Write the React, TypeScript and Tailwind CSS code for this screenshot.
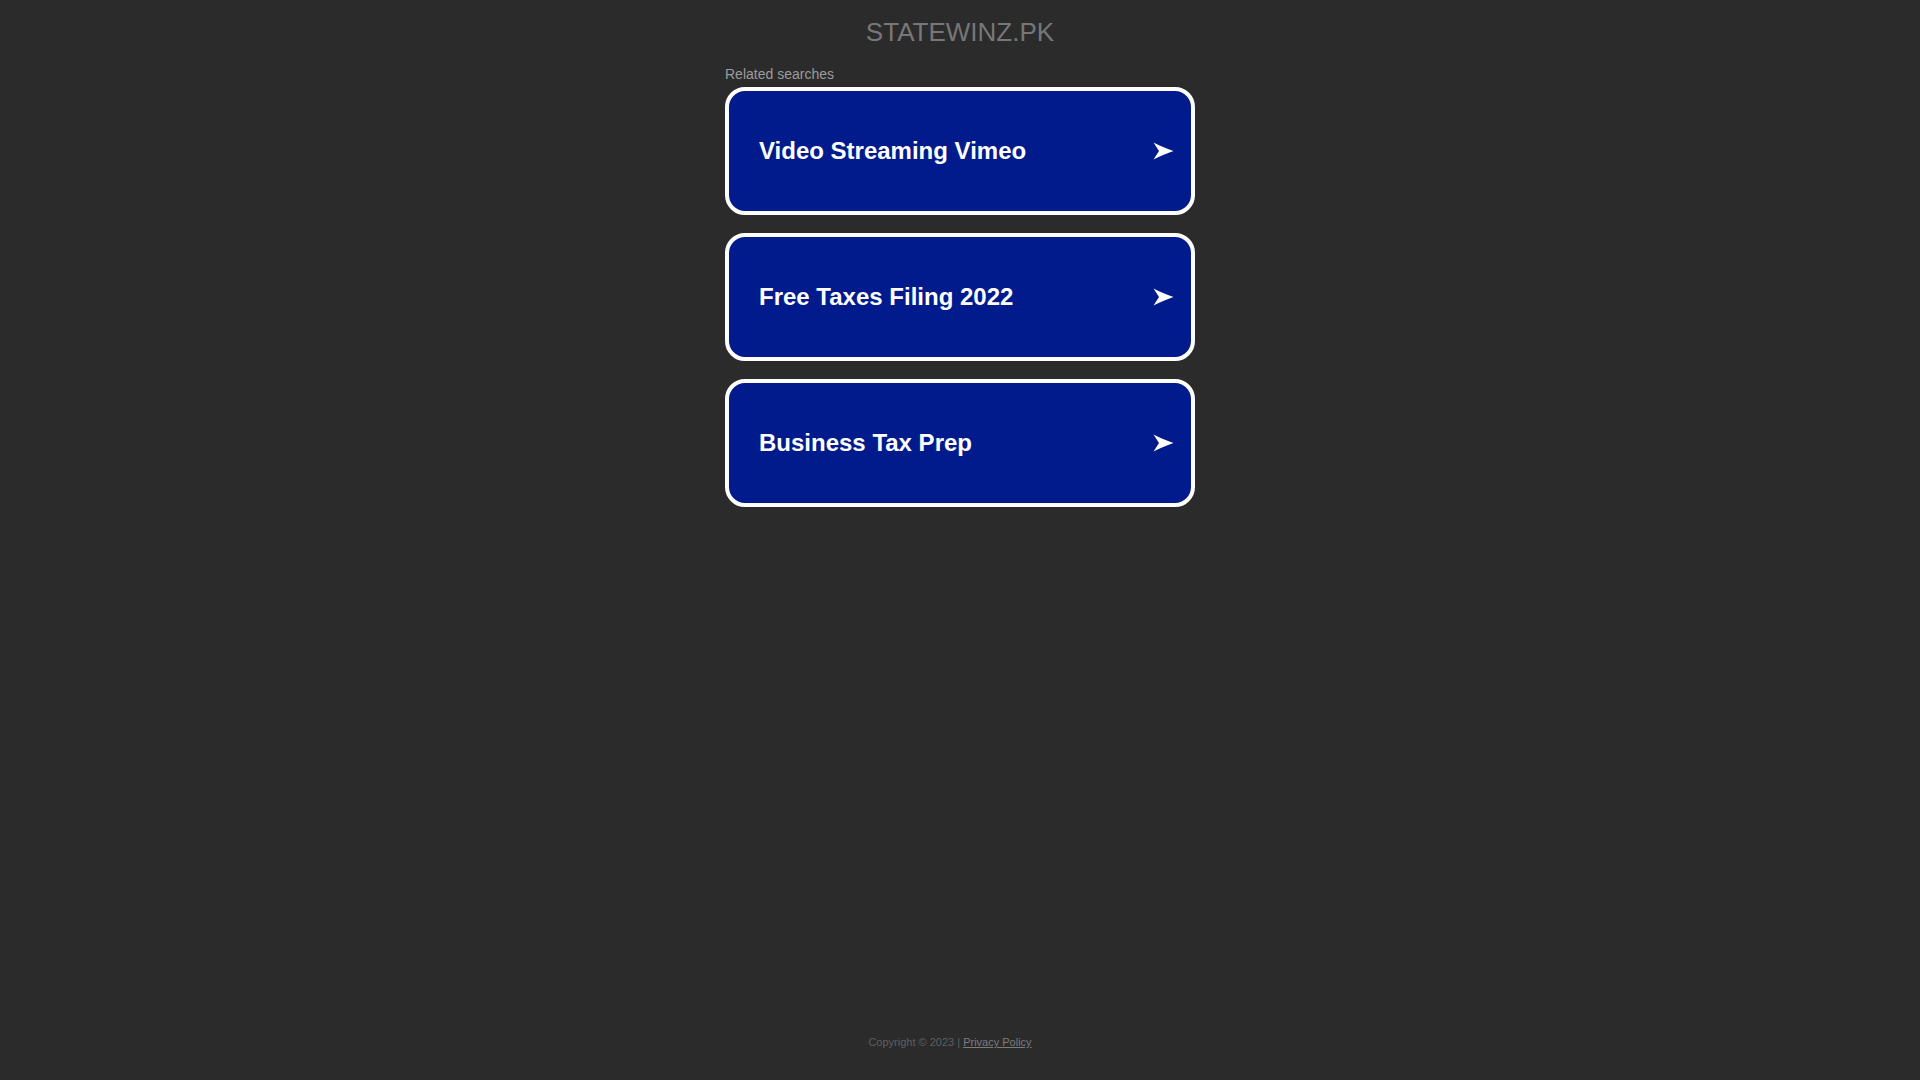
import React from "react";

const items = ["Video Streaming Vimeo", "Free Taxes Filing 2022", "Business Tax Prep"];

function Arrow() {
  return (
    <svg width="21" height="18" viewBox="0 0 21 18" className="shrink-0">
      <path d="M0.5 0.5 Q8 4.5 20.5 9 Q8 13.5 0.5 17.5 L6 9 Z" fill="#ffffff" />
    </svg>
  );
}

export default function App() {
  return (
    <div
      className="min-h-screen bg-[#2b2b2b] flex flex-col items-center"
      style={{ fontFamily: '"Liberation Sans", Arial, sans-serif' }}
    >
      <h1 className="mt-[17px] text-[26px] leading-[30px] text-[#777777] font-normal">STATEWINZ.PK</h1>
      <div className="w-[470px] mt-[19px]">
        <div className="text-[14px] leading-[16px] text-[#9b9b9b]">Related searches</div>
        <div className="mt-[5px] flex flex-col gap-[18px]">
          {items.map((t) => (
            <a
              key={t}
              href="#"
              className="h-[128px] border-4 border-white rounded-[20px] bg-[#011b8c] flex items-center justify-between pl-[30px] pr-[17px]"
            >
              <span className="text-[24px] font-bold text-white leading-[28px]">{t}</span>
              <Arrow />
            </a>
          ))}
        </div>
      </div>
      <div className="mt-auto mb-[31px] mr-[20px] text-[11px] leading-[13px] text-[#5f5f5f]">
        Copyright © 2023 | <a href="#" className="underline text-[#7c7c7c]">Privacy Policy</a>
      </div>
    </div>
  );
}
